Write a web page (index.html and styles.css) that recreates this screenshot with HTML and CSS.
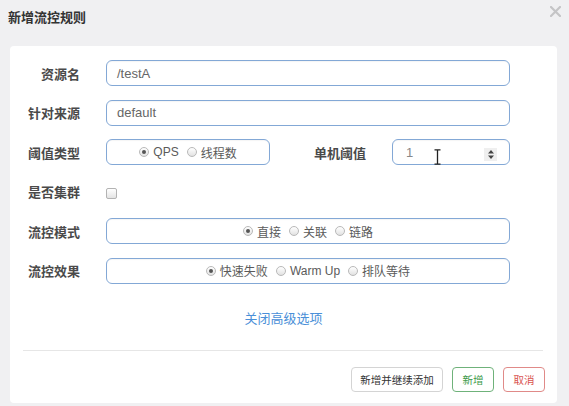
FILE: index.html
```html
<!DOCTYPE html>
<html lang="zh-CN">
<head>
<meta charset="utf-8">
<title>新增流控规则</title>
<link rel="stylesheet" href="styles.css">
</head>
<body>
<div class="dialog">
  <div class="header">
    <div class="title">新增流控规则</div>
    <svg class="close" width="11" height="11" viewBox="0 0 11 11"><path d="M1 1L10 10M10 1L1 10" stroke="#c4c4c6" stroke-width="2.2" stroke-linecap="round"/></svg>
  </div>
  <div class="panel">
    <div class="row">
      <div class="label">资源名</div>
      <div class="field wide"><span class="value">/testA</span></div>
    </div>
    <div class="row">
      <div class="label">针对来源</div>
      <div class="field wide"><span class="value">default</span></div>
    </div>
    <div class="row">
      <div class="label">阈值类型</div>
      <div class="field box-small radios">
        <span class="opt"><span class="radio checked"></span>QPS</span>
        <span class="opt"><span class="radio"></span>线程数</span>
      </div>
      <div class="label label2">单机阈值</div>
      <div class="field number">
        <span class="value">1</span>
        <span class="spin"><svg width="8" height="11" viewBox="0 0 8 11"><path d="M4 1L7 4.5H1Z M4 10L7 6.5H1Z" fill="#444"/></svg></span>
        <svg class="ibeam" width="7" height="16" viewBox="0 0 7 16"><path d="M0.5 0.8H6.5M0.5 15.2H6.5M3.5 0.8V15.2" stroke="#222" stroke-width="1.3" fill="none"/></svg>
      </div>
    </div>
    <div class="row">
      <div class="label">是否集群</div>
      <span class="checkbox"></span>
    </div>
    <div class="row">
      <div class="label">流控模式</div>
      <div class="field wide radios">
        <span class="opt"><span class="radio checked"></span>直接</span>
        <span class="opt"><span class="radio"></span>关联</span>
        <span class="opt"><span class="radio"></span>链路</span>
      </div>
    </div>
    <div class="row">
      <div class="label">流控效果</div>
      <div class="field wide radios">
        <span class="opt"><span class="radio checked"></span>快速失败</span>
        <span class="opt"><span class="radio"></span>Warm Up</span>
        <span class="opt"><span class="radio"></span>排队等待</span>
      </div>
    </div>
    <div class="link-row"><a class="link">关闭高级选项</a></div>
    <div class="divider"></div>
    <div class="footer">
      <button class="btn btn-default">新增并继续添加</button>
      <button class="btn btn-success">新增</button>
      <button class="btn btn-danger">取消</button>
    </div>
  </div>
</div>
</body>
</html>
```
FILE: styles.css
```css
* { box-sizing: border-box; }
html, body {
  margin: 0;
  padding: 0;
  background: #f0f0f2;
}
body {
  width: 569px;
  height: 406px;
  overflow: hidden;
  font-family: "Liberation Sans", "Noto Sans CJK SC", sans-serif;
  color: #333;
}
.dialog {
  display: flex;
  flex-direction: column;
}
.header {
  height: 46px;
  display: flex;
  justify-content: space-between;
  align-items: flex-start;
  padding: 10px 8px 0 8px;
}
.title {
  font-size: 13px;
  font-weight: bold;
  line-height: 16px;
  color: #333;
}
.close {
  margin-top: -4px;
}
.panel {
  margin-left: 10px;
  width: 547px;
  height: 357px;
  background: #fff;
  border-radius: 4px;
  padding-top: 14px;
  display: flex;
  flex-direction: column;
}
.row {
  display: flex;
  align-items: center;
  height: 26px;
  margin-bottom: 13.5px;
}
.label {
  width: 70px;
  margin-right: 26px;
  text-align: right;
  font-size: 13px;
  font-weight: bold;
  color: #4a4a4a;
  flex-shrink: 0;
}
.label2 {
  width: 96px;
}
.field {
  height: 26px;
  border: 1px solid #83a8d6;
  border-radius: 6px;
  display: flex;
  align-items: center;
  font-size: 13px;
  color: #666;
  box-shadow: inset 0 1px 1px rgba(0,0,0,0.04);
}
.wide { width: 404px; }
.box-small { width: 164px; }
.number {
  width: 118px;
  position: relative;
}
.value {
  padding-left: 10px;
}
.number .value { padding-left: 13px; color: #888; }
.spin {
  position: absolute;
  right: 12px;
  top: 8px;
  width: 13px;
  height: 13px;
  background: #efefef;
  display: flex;
  align-items: center;
  justify-content: center;
}
.ibeam {
  position: absolute;
  left: 41px;
  top: 9px;
}
.radios {
  justify-content: center;
  gap: 8px;
  font-size: 12px;
  color: #5a5a5a;
}
.opt {
  display: inline-flex;
  align-items: center;
  gap: 4px;
}
.radio {
  width: 10px;
  height: 10px;
  border-radius: 50%;
  border: 1px solid #b9b9b9;
  background: linear-gradient(#ffffff, #e2e2e2);
  display: inline-flex;
  align-items: center;
  justify-content: center;
}
.radio.checked::after {
  content: "";
  width: 4px;
  height: 4px;
  border-radius: 50%;
  background: #555;
}
.checkbox {
  width: 11px;
  height: 11px;
  border: 1px solid #b3b3b3;
  border-radius: 2px;
  background: linear-gradient(#ffffff, #e4e4e4);
  margin-top: 4px;
}
.link-row {
  text-align: center;
  margin-top: 12px;
  height: 18px;
  line-height: 18px;
}
.link {
  color: #4a8fd8;
  font-size: 13px;
  text-decoration: none;
}
.divider {
  height: 1px;
  background: #e6e6e6;
  margin: 23px 14px 0 13px;
}
.footer {
  display: flex;
  justify-content: flex-end;
  gap: 9px;
  padding-right: 12px;
  margin-top: 16px;
}
.btn {
  height: 25px;
  border-radius: 4px;
  background: #fff;
  font-family: "Liberation Sans", "Noto Sans CJK SC", sans-serif;
  font-size: 10.5px;
  padding: 0;
  cursor: pointer;
}
.btn-default {
  width: 92px;
  border: 1px solid #d4d4d4;
  color: #333;
}
.btn-success {
  width: 42px;
  border: 1px solid #6fb27a;
  color: #3d9a4a;
}
.btn-danger {
  width: 42px;
  border: 1px solid #e08a88;
  color: #d9534f;
}
```
